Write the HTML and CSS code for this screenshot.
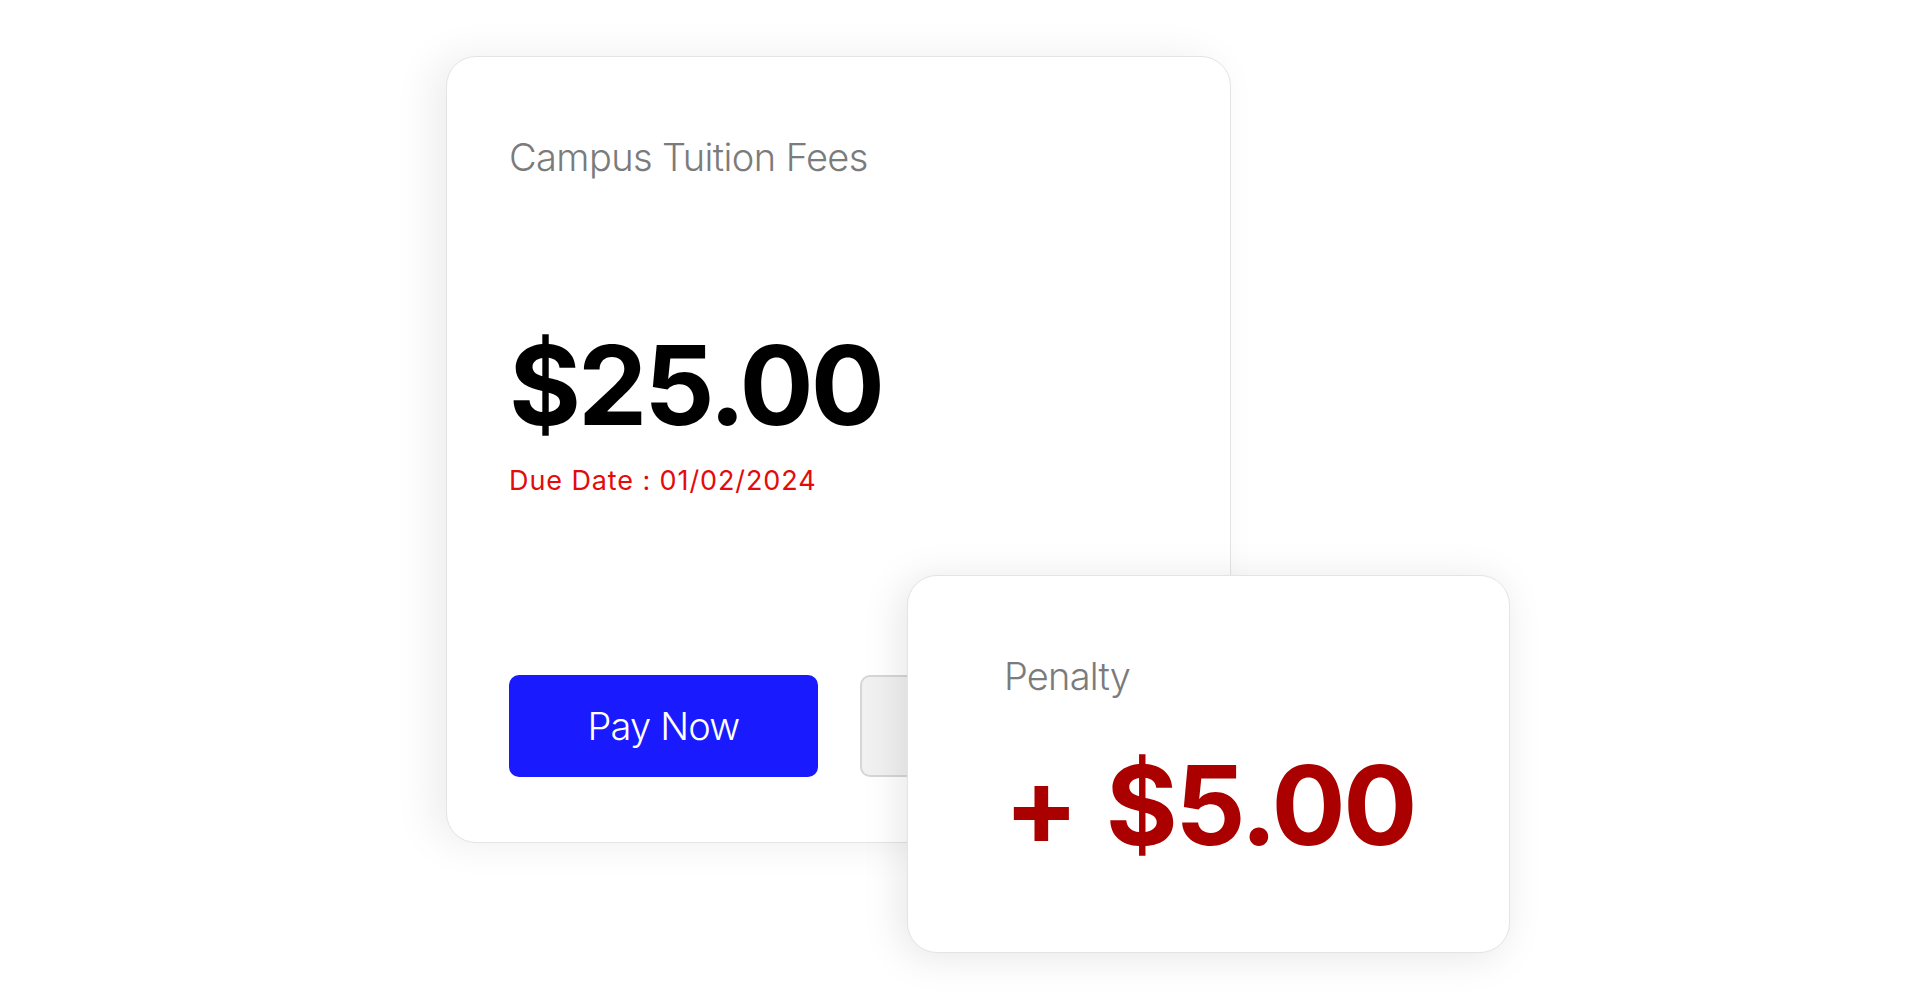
FILE: index.html
```html
<!DOCTYPE html>
<html>
<head>
    <meta charset="UTF-8" />
    <meta name="viewport" content="width=device-width, initial-scale=1.0"/>
    <title>Campus Tuition Fees</title>
    <link rel="stylesheet" href="styles.css">
</head>
<body>
    <main class="stage">
        <!-- 主账单卡片 -->
        <section class="fee-card">
            <h2 class="fee-title">Campus Tuition Fees</h2>
            <div class="fee-amount">$25.00</div>
            <p class="fee-due">Due Date : 01/02/2024</p>
            <div class="fee-actions">
                <button class="btn btn-primary">Pay Now</button>
                <!-- 第二个按钮被罚款卡片遮住 -->
                <button class="btn btn-secondary" aria-label="More"></button>
            </div>
        </section>

        <!-- 罚款卡片，叠在主卡片右下角 -->
        <section class="penalty-card">
            <h3 class="penalty-title">Penalty</h3>
            <div class="penalty-amount">+ $5.00</div>
        </section>
    </main>
</body>
</html>
```

FILE: styles.css
```css
* {
    margin: 0;
    padding: 0;
    box-sizing: border-box;
}
body {
    font-family: Inter, "Liberation Sans", sans-serif;
    background: #ffffff;
    min-height: 100vh;
}

/* 画布：两张卡片相对它定位 */
.stage {
    position: relative;
    width: 1920px;
    height: 996px;
    padding: 56px 0 0 446px;
}

/* 主卡片 */
.fee-card {
    width: 785px;
    height: 787px;
    background: #ffffff;
    border: 1px solid #e4e4e4;
    border-radius: 30px;
    box-shadow: -14px 0 40px rgba(0,0,0,0.07);
    padding: 81px 62px 65px;
    display: flex;
    flex-direction: column;
    overflow: hidden;
}
.fee-title {
    font-size: 38px;
    line-height: 1;
    font-weight: 300;
    letter-spacing: -0.6px;
    color: #7b7b7b;
}
.fee-amount {
    margin-top: 154px;
    font-size: 110px;
    line-height: 1;
    font-weight: 700;
    letter-spacing: -3px;
    color: #000000;
    white-space: nowrap;
}
.fee-due {
    margin-top: 27px;
    font-size: 27px;
    line-height: 1;
    font-weight: 400;
    letter-spacing: 0.9px;
    color: #e30b0b;
}

/* 按钮区 */
.fee-actions {
    margin-top: auto;
    display: flex;
    gap: 42px;
}
.btn {
    width: 309px;
    height: 102px;
    border-radius: 10px;
    font-family: inherit;
    font-size: 38px;
    font-weight: 300;
    letter-spacing: -0.8px;
    cursor: pointer;
    flex-shrink: 0;
}
.btn-primary {
    background: #1a1aff;
    color: #ffffff;
    border: none;
}
.btn-secondary {
    background: #f1f1f1;
    border: 2px solid #d6d6d6;
}

/* 罚款卡片 */
.penalty-card {
    position: absolute;
    left: 907px;
    top: 575px;
    width: 603px;
    height: 378px;
    background: #ffffff;
    border: 1px solid #e4e4e4;
    border-radius: 30px;
    box-shadow: -6px 4px 40px rgba(0,0,0,0.1);
    padding: 81px 96px 0;
}
.penalty-title {
    font-size: 38px;
    line-height: 1;
    font-weight: 300;
    letter-spacing: -0.8px;
    color: #7b7b7b;
}
.penalty-amount {
    margin-top: 55px;
    font-size: 110px;
    line-height: 1;
    font-weight: 700;
    letter-spacing: -2.5px;
    word-spacing: 6px;
    color: #aa0000;
    white-space: nowrap;
}
```
